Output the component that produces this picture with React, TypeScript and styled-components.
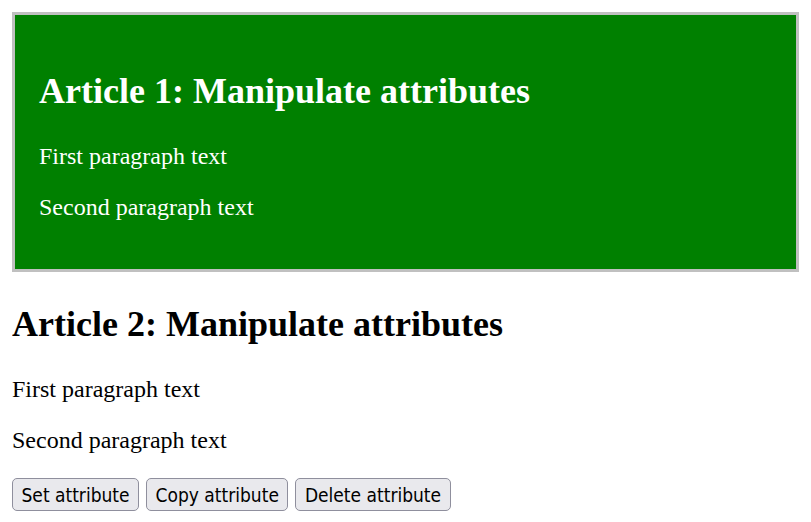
import { FC } from "react";
import styled, { createGlobalStyle } from "styled-components";

const GlobalStyle = createGlobalStyle`
    body {
        margin: 12px;
        background: #ffffff;
        font-family: "Liberation Serif", "Times New Roman", serif;
        font-size: 24px;
        color: #000000;
    }
`;

const Article = styled.article<{ $boxed?: boolean }>`
    margin: 0;
    padding: ${props => props.$boxed ? "24px" : "0"};
    border: ${props => props.$boxed ? "3px solid #c0c0c0" : "0"};
    background-color: ${props => props.$boxed ? "#008000" : "transparent"};
    color: ${props => props.$boxed ? "#ffffff" : "#000000"};
`;

const Title = styled.h1`
    font-size: 36px;
    font-weight: bold;
    line-height: normal;
    margin: 31px 0;
`;

const Text = styled.p`
    font-size: 24px;
    line-height: normal;
    margin: 24px 0;
`;

const Actions = styled.div`
    display: flex;
    gap: 7px;
    margin-top: 1px;
`;

const Button = styled.button`
    height: 33px;
    padding: 0 8.5px;
    border: 1px solid #8f8f9d;
    border-radius: 5px;
    background-color: #e9e9ed;
    color: #000000;
    font-family: "DejaVu Sans Condensed", "DejaVu Sans", Tahoma, sans-serif;
    font-stretch: condensed;
    font-size: 19px;
    cursor: pointer;
`;

const App: FC = () => {
    return (
        <>
            <GlobalStyle />
            <Article $boxed>
                <Title>Article 1: Manipulate attributes</Title>
                <Text>First paragraph text</Text>
                <Text>Second paragraph text</Text>
            </Article>
            <Article>
                <Title>Article 2: Manipulate attributes</Title>
                <Text>First paragraph text</Text>
                <Text>Second paragraph text</Text>
            </Article>
            <Actions>
                <Button>Set attribute</Button>
                <Button>Copy attribute</Button>
                <Button>Delete attribute</Button>
            </Actions>
        </>
    )
}

export default App;
